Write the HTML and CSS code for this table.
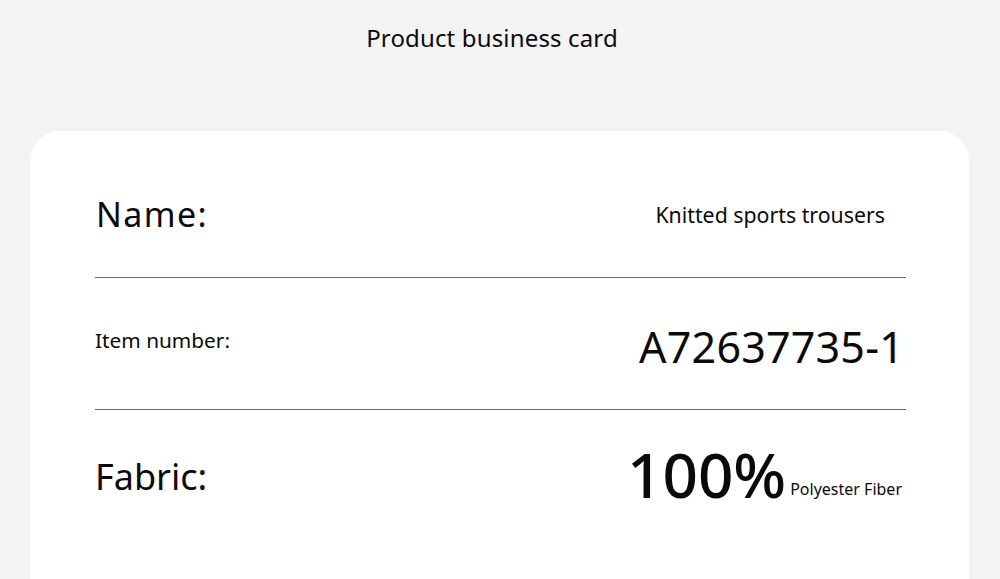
FILE: index.html
```html
<!DOCTYPE html>
<html lang="en">
<head>
<meta charset="utf-8">
<title>Product business card</title>
<link rel="stylesheet" href="styles.css">
</head>
<body>
<div class="page">
  <h1 class="title">Product business card</h1>
  <div class="card">
    <div class="row">
      <span class="label label-name">Name:</span>
      <span class="value value-name">Knitted sports trousers</span>
    </div>
    <div class="row">
      <span class="label label-item">Item number:</span>
      <span class="value value-item">A72637735-1</span>
    </div>
    <div class="row row-last">
      <span class="label label-fabric">Fabric:</span>
      <span class="value value-fabric"><span class="pct">100%</span><span class="pct-note">Polyester Fiber</span></span>
    </div>
  </div>
</div>
</body>
</html>
```

FILE: styles.css
```css
html, body {
  margin: 0;
  padding: 0;
  background: #f3f3f3;
  font-family: "Noto Sans", "Open Sans", sans-serif;
  color: #0a0a0a;
  overflow: hidden;
}
.page {
  width: 1000px;
  height: 579px;
  overflow: hidden;
}
.title {
  margin: 0;
  padding: 20px 16px 0 0;
  height: 40px;
  font-size: 24px;
  font-weight: 400;
  line-height: 36px;
  text-align: center;
  letter-spacing: 0.15px;
}
.card {
  margin: 71px 31px 0 30px;
  background: #fff;
  border-radius: 30px;
  padding: 15px 63px 40px 65px;
  height: 600px;
}
.row {
  display: flex;
  justify-content: space-between;
  align-items: center;
  height: 131px;
  border-bottom: 1px solid #6a6a6a;
}
.row-last {
  border-bottom: none;
}
.label-name {
  font-size: 34px;
  letter-spacing: 1.4px;
  margin-left: 1px;
  margin-top: 4px;
}
.value-name {
  font-size: 21.3px;
  margin-right: 21px;
  margin-top: 6px;
}
.label-item {
  font-size: 20.8px;
  margin-top: -8px;
}
.value-item {
  font-size: 43px;
  letter-spacing: 0.2px;
  margin-right: 2px;
  margin-top: 6px;
}
.label-fabric {
  font-size: 36px;
  margin-top: 2px;
}
.value-fabric {
  display: flex;
  align-items: baseline;
  margin-right: 4px;
  margin-top: -4px;
}
.pct {
  font-size: 62px;
  font-weight: 500;
}
.pct-note {
  font-size: 16px;
  margin-left: 4px;
  position: relative;
  top: -3px;
}
```
